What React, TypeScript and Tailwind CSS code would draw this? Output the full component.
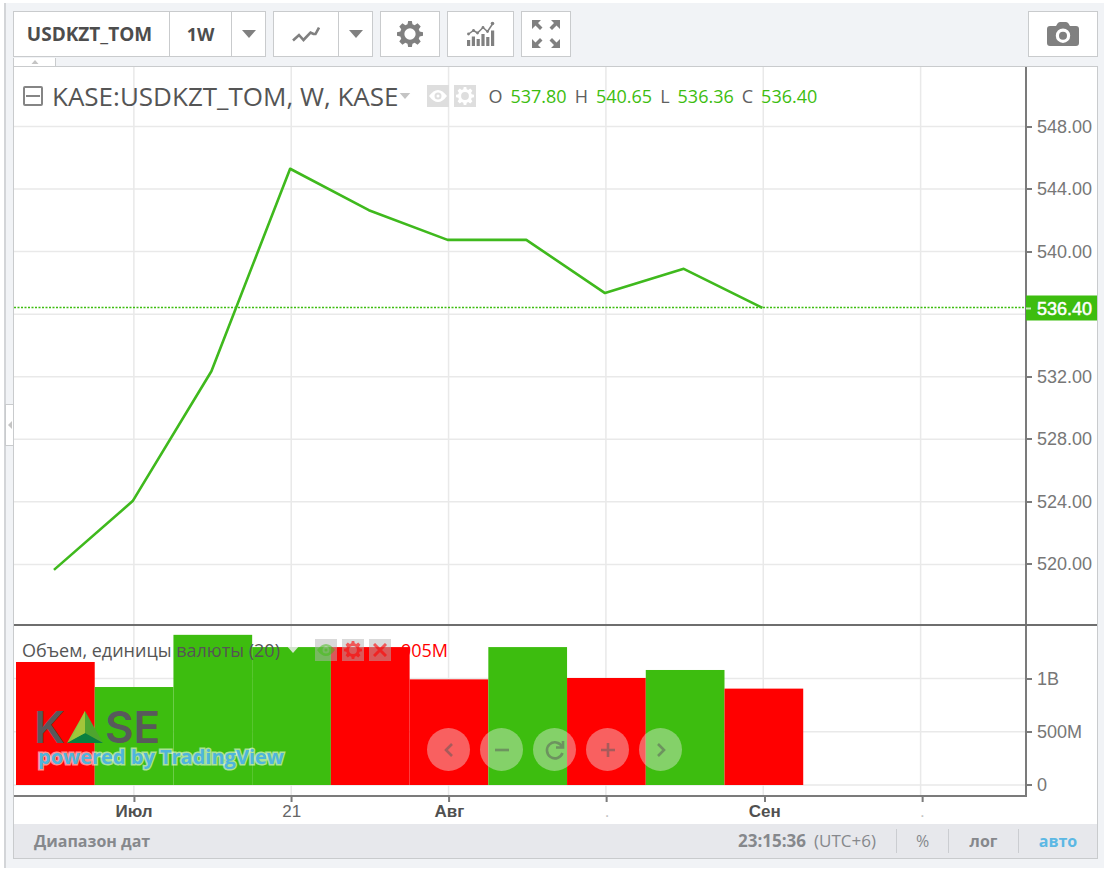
import type { ReactNode } from "react";

const UI = "font-['Open_Sans','Noto_Sans',sans-serif]";

const PLOT_W = 1012;
const PRICE_H = 557;
const VOLUME_H = 169;
const SLOT = 78.8;

const priceY = (price: number) => 59.5 + (548 - price) * 15.64;
const volumeY = (millions: number) => 159 - millions * 0.1065;
const slotX = (index: number) => 40 + index * SLOT;

const closes = [519.65, 524.05, 532.35, 545.3, 542.65, 540.75, 540.75, 537.35, 538.9, 536.4];
const volumes = [
  { value: 1155, up: false },
  { value: 920, up: true },
  { value: 1410, up: true },
  { value: 1295, up: true },
  { value: 1295, up: false },
  { value: 992, up: false },
  { value: 1295, up: true },
  { value: 1005, up: false },
  { value: 1080, up: true },
  { value: 905, up: false },
];
const priceTicks = [548, 544, 540, 536, 532, 528, 524, 520];
const volumeTicks = [
  { value: 1000, label: "1B" },
  { value: 500, label: "500M" },
  { value: 0, label: "0" },
];
const timeTicks = [
  { x: 120, label: "Июл", strong: true },
  { x: 277.5, label: "21", strong: false },
  { x: 435, label: "Авг", strong: true },
  { x: 592.5, label: ".", strong: false },
  { x: 750, label: "Сен", strong: true },
  { x: 907.5, label: ".", strong: false },
];
const ohlc = [
  ["O", "537.80"],
  ["H", "540.65"],
  ["L", "536.36"],
  ["C", "536.40"],
];

const GEAR =
  "M10.3 0h3.4l.6 3.1 2 .8L19 2.1 21.9 5l-1.800 2.700.8 2 3.100.600v3.400l-3.100.600-.8 2L21.900 19 19 21.900l-2.700-1.800-2 .8-.6 3.100h-3.400l-.6-3.100-2-.8L5 21.900 2.100 19l1.800-2.700-.8-2L0 13.700v-3.400l3.100-.6.8-2L2.100 5 5 2.100l2.700 1.800 2-.8zM12 6.800a5.200 5.200 0 1 0 0 10.400 5.200 5.200 0 0 0 0-10.400z";

function Gear({ className }: { className: string }) {
  return (
    <svg viewBox="0 0 24 24" className={className} fill="currentColor" fillRule="evenodd" aria-hidden="true">
      <path d={GEAR} />
    </svg>
  );
}

function Caret({ className }: { className: string }) {
  return (
    <svg viewBox="0 0 14 8" className={className} fill="currentColor" aria-hidden="true">
      <path d="M0 0h14L7 8z" />
    </svg>
  );
}

function ToolButton({ label, className, children }: { label: string; className: string; children: ReactNode }) {
  return (
    <button
      type="button"
      aria-label={label}
      className={`flex h-full items-center justify-center text-[#808080] ${className}`}
    >
      {children}
    </button>
  );
}

const group = "flex h-[46px] border border-[#c9cbcd] bg-white divide-x divide-[#c9cbcd]";

function Toolbar() {
  return (
    <header className="flex items-start gap-[7px]">
      <div className={`${group} w-[253px]`}>
        <button type="button" className="w-[156px] pr-1 text-[19px] font-bold text-[#4d4d4d]">
          USDKZT_TOM
        </button>
        <button type="button" className="flex-1 text-[18px] font-bold text-[#4d4d4d]">
          1W
        </button>
        <ToolButton label="Интервал" className="w-[33px]">
          <Caret className="h-2 w-3.5" />
        </ToolButton>
      </div>
      <div className={`${group} w-[100px]`}>
        <ToolButton label="Тип графика" className="flex-1">
          <svg viewBox="0 0 28 16" className="h-4 w-7" fill="none" stroke="currentColor" strokeWidth="2.6" aria-hidden="true">
            <path d="M1 14.500l6-5.500 4.500 5 7-7.500 3 1.500h2l3.500-6.500" />
          </svg>
        </ToolButton>
        <ToolButton label="Выбрать тип" className="w-[33px]">
          <Caret className="h-2 w-3.5" />
        </ToolButton>
      </div>
      <div className={`${group} w-[60px]`}>
        <ToolButton label="Настройки" className="flex-1">
          <Gear className="size-[26px]" />
        </ToolButton>
      </div>
      <div className={`${group} w-[67px]`}>
        <ToolButton label="Индикаторы" className="flex-1">
          <svg viewBox="0 0 28 26" className="h-[26px] w-7" fill="currentColor" aria-hidden="true">
            <path d="M0 19h3.200v6H0zM4.800 15.500H8V25H4.800zM9.600 18h3.200v7H9.600zM14.400 13h3.200v12h-3.200zM19.200 16h3.200v9h-3.200zM24 9.500h3.200V25H24z" />
            <path d="M1 13.500l5.500-4 4 2.500 5.500-5.500 4.500 4L25.500 3" fill="none" stroke="currentColor" strokeWidth="1.500" />
            <circle cx="1.500" cy="13" r="1.400" />
            <circle cx="6.500" cy="9.500" r="1.400" />
            <circle cx="10.500" cy="12" r="1.400" />
            <circle cx="16" cy="6.500" r="1.400" />
            <circle cx="20.500" cy="10.500" r="1.400" />
            <circle cx="25.500" cy="2.500" r="1.800" />
          </svg>
        </ToolButton>
      </div>
      <div className={`${group} w-[50px]`}>
        <ToolButton label="Полный экран" className="flex-1">
          <svg viewBox="0 0 28 28" className="size-7" fill="currentColor" aria-hidden="true">
            <path d="M0 0h9L6 3l4.500 4.500-2.500 2.500L3.500 5.500 0 9zM28 0v9l-3.500-3.500L20 10l-2.500-2.500L22 3l-3-3zM0 28v-9l3.500 3.500L8 18l2.500 2.500L6 25l3 3zM28 28h-9l3-3-4.500-4.500L20 18l4.500 4.500L28 19z" />
          </svg>
        </ToolButton>
      </div>
      <div className={`${group} ml-auto w-[70px]`}>
        <ToolButton label="Снимок" className="flex-1">
          <svg viewBox="0 0 32 24" className="h-6 w-8" fill="currentColor" fillRule="evenodd" aria-hidden="true">
            <path d="M3 4h6l1.500-2.500Q11.300 0 13 0h6q1.700 0 2.500 1.500L23 4h6q3 0 3 3v14q0 3-3 3H3q-3 0-3-3V7q0-3 3-3zM16 6.500a7.200 7.200 0 1 0 0 14.400 7.200 7.200 0 0 0 0-14.400zM16 9.700a4 4 0 1 1 0 8 4 4 0 0 1 0-8z" />
          </svg>
        </ToolButton>
      </div>
    </header>
  );
}

function IconTile({ label, className, children }: { label: string; className: string; children: ReactNode }) {
  return (
    <button type="button" aria-label={label} className={`flex size-[22px] items-center justify-center ${className}`}>
      {children}
    </button>
  );
}

function Eye() {
  return (
    <svg viewBox="0 0 18 12" className="h-3 w-[18px]" fill="currentColor" fillRule="evenodd" aria-hidden="true">
      <path d="M0 6q9-12 18 0-9 12-18 0zM9 2.500a3.500 3.500 0 1 0 0 7 3.500 3.500 0 0 0 0-7zM9 4.500a1.500 1.500 0 1 1 0 3 1.500 1.500 0 0 1 0-3z" />
    </svg>
  );
}

function VerticalGrid({ height }: { height: number }) {
  return (
    <g stroke="#e9e9e9" strokeWidth="1.500">
      {timeTicks.map((tick) => (
        <line key={tick.x} x1={tick.x} x2={tick.x} y1="0" y2={height} vectorEffect="non-scaling-stroke" />
      ))}
    </g>
  );
}

function AxisLabel({ top, children }: { top: number; children: ReactNode }) {
  return (
    <div className="absolute left-0 flex -translate-y-1/2 items-center gap-[5px]" style={{ top: `${top}%` }}>
      <span className="h-0.5 w-[5px] bg-[#7b7b7b]" />
      <span>{children}</span>
    </div>
  );
}

const axis =
  "relative w-[72px] shrink-0 border-l-2 border-[#7b7b7b] font-['Liberation_Sans',Arial,sans-serif] text-[18px] leading-6 text-[#777]";

function PricePane() {
  const points = closes.map((close, i) => `${slotX(i)},${priceY(close)}`).join(" ");
  return (
    <section className="flex min-h-0 flex-[557_1_0%]">
      <div className="relative min-w-0 flex-1">
        <svg
          viewBox={`0 0 ${PLOT_W} ${PRICE_H}`}
          preserveAspectRatio="none"
          className="absolute inset-0 size-full"
          role="img"
          aria-label="USDKZT_TOM"
        >
          <VerticalGrid height={PRICE_H} />
          <g stroke="#e9e9e9" strokeWidth="1.500">
            {priceTicks.map((tick) => (
              <line key={tick} x1="0" x2={PLOT_W} y1={priceY(tick)} y2={priceY(tick)} vectorEffect="non-scaling-stroke" />
            ))}
          </g>
          <line x1="0" x2={PLOT_W} y1="240.500" y2="240.500" stroke="#3dbd0f" strokeWidth="1.500" strokeDasharray="2 1.500" vectorEffect="non-scaling-stroke" />
          <polyline points={points} fill="none" stroke="#3fb91d" strokeWidth="2.600" strokeLinejoin="round" vectorEffect="non-scaling-stroke" />
        </svg>
        <div className="absolute top-[13px] left-[9px] flex h-8 items-center whitespace-nowrap">
          <button type="button" aria-label="Свернуть" className="mr-[9px] flex size-5 items-center justify-center rounded-[2px] border-2 border-[#858585]">
            <span className="h-0.5 w-3.5 bg-[#858585]" />
          </button>
          <h1 className="text-[26px] leading-8 text-[#555]">KASE:USDKZT_TOM, W, KASE</h1>
          <Caret className="mr-4 ml-px h-1.5 w-3 text-[#c4c4c4]" />
          <IconTile label="Скрыть" className="mr-[5px] bg-[#dedede] text-white">
            <Eye />
          </IconTile>
          <IconTile label="Формат" className="mr-3 bg-[#dedede] text-white">
            <Gear className="size-[18px]" />
          </IconTile>
          <dl className="flex gap-2 text-[18px] leading-6">
            {ohlc.map(([name, value]) => (
              <div key={name} className="flex gap-2">
                <dt className="text-[#606060]">{name}</dt>
                <dd className="text-[#3dbd0f]">{value}</dd>
              </div>
            ))}
          </dl>
        </div>
      </div>
      <div className={axis}>
        {priceTicks
          .filter((tick) => tick !== 536)
          .map((tick) => (
            <AxisLabel key={tick} top={(priceY(tick) / PRICE_H) * 100}>
              {tick.toFixed(2)}
            </AxisLabel>
          ))}
        <div
          className="absolute -left-px right-0 flex h-[25px] -translate-y-1/2 items-center gap-1.5 bg-[#3dbd0f] text-white"
          style={{ top: `${(241 / PRICE_H) * 100}%` }}
        >
          <span className="h-0.5 w-[5px] bg-white/70" />
          <strong className="font-normal [-webkit-text-stroke:0.5px_white]">536.40</strong>
        </div>
      </div>
    </section>
  );
}

function Brand() {
  return (
    <a href="#tradingview" className="absolute bottom-6 left-5 block">
      <span className="flex h-8 items-center font-['Inter','Liberation_Sans',sans-serif] text-[44px] leading-8 font-semibold text-[#58595b]">
        K
        <svg viewBox="0 0 36 32" className="mx-0.5 h-8 w-9" aria-hidden="true">
          <path d="M18 0L0 32l18-8z" fill="#8cc63f" />
          <path d="M18 0l18 32-18-8z" fill="#4ea52f" />
          <path d="M0 32l18-10 18 10z" fill="#0b8040" />
          <path d="M18 0v22L4 29z" fill="#a2c63a" />
        </svg>
        SE
      </span>
      <span className="block pl-1 text-[20px] leading-7 font-bold text-[#4fb5dc] [paint-order:stroke] [-webkit-text-stroke:3px_#ffffff90]">
        powered by TradingView
      </span>
    </a>
  );
}

const navIcons = [
  { label: "Назад", path: "M16 7l-6 6 6 6" },
  { label: "Уменьшить", path: "M6 13h14" },
  { label: "Сбросить", path: "M20 9.500A8 8 0 1 0 20.500 16M21 4v6.500h-7" },
  { label: "Увеличить", path: "M6 13h14M13 6v14" },
  { label: "Вперёд", path: "M10 7l6 6-6 6" },
];

function VolumePane() {
  return (
    <section className="flex min-h-0 flex-[169_1_0%] border-t-2 border-[#6e6e6e]">
      <div className="relative min-w-0 flex-1">
        <svg
          viewBox={`0 0 ${PLOT_W} ${VOLUME_H}`}
          preserveAspectRatio="none"
          className="absolute inset-0 size-full"
          role="img"
          aria-label="Объем"
        >
          <VerticalGrid height={VOLUME_H} />
          {volumeTicks.map((tick) => (
            <line
              key={tick.label}
              x1="0"
              x2={PLOT_W}
              y1={volumeY(tick.value)}
              y2={volumeY(tick.value)}
              stroke="#e9e9e9"
              strokeWidth="1.500"
              vectorEffect="non-scaling-stroke"
            />
          ))}
          {volumes.map((bar, i) => (
            <rect
              key={i}
              x={2 + i * SLOT}
              width={SLOT}
              y={volumeY(bar.value)}
              height={159 - volumeY(bar.value)}
              fill={bar.up ? "#3dbd0f" : "#ff0000"}
            />
          ))}
        </svg>
        <div className="absolute top-[11px] left-2 flex h-[26px] items-center text-[18px] leading-6 whitespace-nowrap text-[#555]">
          <span>Объем, единицы валюты (20)</span>
          <Caret className="mr-4 ml-[7px] h-1.5 w-3 text-[#d2e4cc]" />
          <div className="flex gap-[5px]">
            <IconTile label="Скрыть" className="bg-[#b4b4b4]/50 text-[#3dbd0f]/50">
              <Eye />
            </IconTile>
            <IconTile label="Формат" className="bg-[#b4b4b4]/50 text-[#f00]/60">
              <Gear className="size-[18px]" />
            </IconTile>
            <IconTile label="Удалить" className="bg-[#b4b4b4]/50 text-[#f00]/60">
              <svg viewBox="0 0 14 14" className="size-3.5" stroke="currentColor" strokeWidth="3" aria-hidden="true">
                <path d="M1 1l12 12M13 1L1 13" />
              </svg>
            </IconTile>
          </div>
          <span className="ml-2.5 text-[#f00]">905M</span>
        </div>
        <Brand />
        <nav className="absolute inset-x-0 bottom-6 flex justify-center gap-2.5 pl-[70px]">
          {navIcons.map((icon) => (
            <button
              key={icon.label}
              type="button"
              aria-label={icon.label}
              className="flex size-[43px] items-center justify-center rounded-full bg-[#f0f0f0]/40 text-[#555]/50"
            >
              <svg viewBox="0 0 26 26" className="size-[26px]" fill="none" stroke="currentColor" strokeWidth="2.600" aria-hidden="true">
                <path d={icon.path} />
              </svg>
            </button>
          ))}
        </nav>
      </div>
      <div className={axis}>
        {volumeTicks.map((tick) => (
          <AxisLabel key={tick.label} top={(volumeY(tick.value) / VOLUME_H) * 100}>
            {tick.label}
          </AxisLabel>
        ))}
      </div>
    </section>
  );
}

function TimeAxis() {
  return (
    <div className="flex h-[29px] shrink-0 font-['Liberation_Sans',Arial,sans-serif] text-[17px] leading-5 text-[#666]">
      <div className="relative flex-1 border-t-2 border-[#7b7b7b]">
        {timeTicks.map((tick) => (
          <div
            key={tick.x}
            className="absolute top-0 flex -translate-x-1/2 flex-col items-center"
            style={{ left: `${(tick.x / PLOT_W) * 100}%` }}
          >
            <span className="h-[5px] w-0.5 bg-[#7b7b7b]" />
            <span className={tick.strong ? "font-bold text-[#505050]" : tick.label === "." ? "text-[#c4c4c4]" : ""}>
              {tick.label}
            </span>
          </div>
        ))}
      </div>
      <div className="w-[70px]" />
    </div>
  );
}

function StatusBar() {
  return (
    <footer className="flex h-[34px] shrink-0 items-center bg-[#e7e8ec] text-[16px] leading-6 text-[#86888c]">
      <button type="button" className="ml-5 font-bold">
        Диапазон дат
      </button>
      <button type="button" className="mr-5 ml-auto flex gap-2 text-[17px]">
        <strong>23:15:36</strong>
        <span>(UTC+6)</span>
      </button>
      <button type="button" className="w-[52px] border-l border-[#cbcdd1]">
        %
      </button>
      <button type="button" className="w-[70px] border-l border-[#cbcdd1] font-bold">
        лог
      </button>
      <button type="button" className="w-[79px] border-l border-[#cbcdd1] font-bold text-[#5cb8e4]">
        авто
      </button>
    </footer>
  );
}

export default function App() {
  return (
    <div className={`${UI} h-screen bg-white pt-[3px] pb-1 pl-1`}>
      <div className="relative flex h-full flex-col border-l-2 border-[#d3d5d8] bg-[#f1f3f6] pt-2 pr-1.5 pb-[9px] pl-[7px]">
        <Toolbar />
        <button
          type="button"
          aria-label="Скрыть панель"
          className="mt-px flex h-2 w-[43px] items-center justify-center border-x border-[#c9cbcd] bg-white text-[#c4c4c4]"
        >
          <Caret className="h-1 w-2 rotate-180" />
        </button>
        <main className="flex min-h-0 flex-1 flex-col border border-[#c9cbcd] bg-white">
          <PricePane />
          <VolumePane />
          <TimeAxis />
          <StatusBar />
        </main>
        <button
          type="button"
          aria-label="Открыть боковую панель"
          className="absolute top-[401px] -left-px flex h-[42px] w-[9px] items-center justify-center border border-[#c9cbcd] bg-white text-[#c4c4c4]"
        >
          <svg viewBox="0 0 4 8" className="h-2 w-1" fill="currentColor" aria-hidden="true">
            <path d="M4 0v8L0 4z" />
          </svg>
        </button>
      </div>
    </div>
  );
}
